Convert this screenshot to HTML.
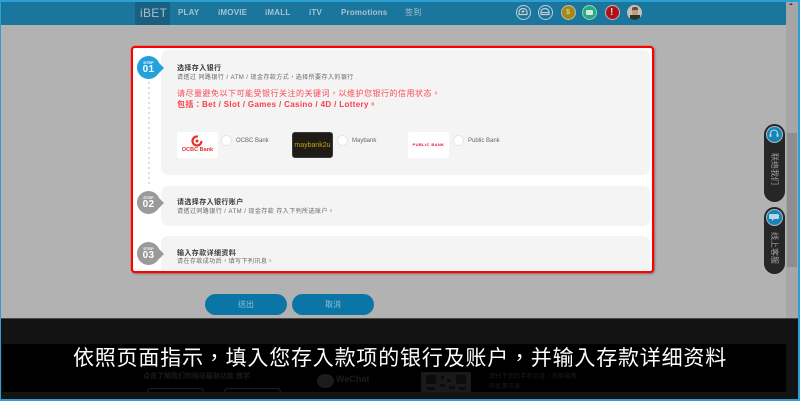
<!DOCTYPE html>
<html lang="zh-Hant"><head><meta charset="utf-8">
<style>
*{box-sizing:border-box}
html,body{margin:0;padding:0}
body{width:800px;height:401px;overflow:hidden;position:relative;background:#b2b2b2;font-family:"Liberation Sans","Noto Sans CJK TC",sans-serif}
.a{position:absolute;white-space:nowrap}
.nav{top:6px;font-size:8px;font-weight:bold;color:#a9c3d0;line-height:13px;letter-spacing:.2px}
.ic{position:absolute;top:5px;width:15px;height:15px;border-radius:50%;border:1.5px solid #c4ced3}
.card{position:absolute;left:161px;width:489px;background:#f4f4f4;border-radius:7px}
.badge{position:absolute;left:137px;width:23px;height:23px;border-radius:50%;color:#fff;text-align:center}
.badge:after{content:"";position:absolute;left:19px;top:3.5px;border-left:8px solid;border-left-color:inherit;border-top:8px solid transparent;border-bottom:8px solid transparent}
.badge b{position:absolute;left:0;width:23px;text-align:center}
.badge .s{top:4px;font-size:4px;line-height:5px;font-weight:bold}
.badge .n{top:8px;font-size:10px;line-height:11px;letter-spacing:.3px}
.t1{font-size:7px;font-weight:bold;color:#3a3a3a;left:177px;line-height:10px;letter-spacing:.4px}
.t2{font-size:6px;color:#666;left:177px;line-height:9px;letter-spacing:.45px}
.radio{position:absolute;top:135px;width:11px;height:11px;border-radius:50%;background:#fff;border:1px solid #e6e6e6}
.bl{top:137px;font-size:6px;color:#666;line-height:9px}
.logo{position:absolute;top:132px;width:41px;height:26px;border-radius:2px;background:#fff;overflow:hidden}
.dot{position:absolute;left:148px;width:2px;height:2px;border-radius:50%;background:#d2d2d2}
.btn{position:absolute;top:294px;height:21px;border-radius:11px;background:#0b76a6;color:#8cc0d6;font-size:8px;line-height:21px;text-align:center}
.side{position:absolute;left:764px;width:21px;background:#262626;border-radius:11px}
.side i{position:absolute;left:2px;top:2px;width:17px;height:17px;border-radius:50%;background:#1585b6;border:1.5px solid #aeb9bd}
.side span{position:absolute;left:4px;width:13px;font-size:8px;line-height:13px;color:#a3a3a3;text-align:center;writing-mode:vertical-rl;text-orientation:sideways;top:29px}
</style></head>
<body>
<!-- header -->
<div class="a" style="left:0;top:0;width:800px;height:25px;background:#1b769d"></div>
<div class="a" style="left:135px;top:2px;width:35px;height:23px;background:#195f80"></div>
<div class="a" style="left:140px;top:5px;font-size:12px;line-height:16px;color:#a8bfca;letter-spacing:.3px">iBET</div>
<div class="a nav" style="left:178px">PLAY</div>
<div class="a nav" style="left:218px">iMOVIE</div>
<div class="a nav" style="left:265px">iMALL</div>
<div class="a nav" style="left:309px">iTV</div>
<div class="a nav" style="left:341px">Promotions</div>
<div class="a nav" style="left:405px;font-weight:normal">签到</div>
<div class="ic" style="left:516px"><svg width="12" height="12" viewBox="0 0 12 12" style="display:block"><path d="M2 8.500V6a4 3.500 0 0 1 8 0v2.500z" fill="none" stroke="#c4ced3" stroke-width="1.200"/><path d="M6 4v3M4.500 5.500h3" stroke="#c4ced3"/></svg></div>
<div class="ic" style="left:538px"><svg width="12" height="12" viewBox="0 0 12 12" style="display:block"><path d="M2 8.500V6a4 3.500 0 0 1 8 0v2.500z" fill="none" stroke="#c4ced3" stroke-width="1.200"/><path d="M2 6.500h8" stroke="#c4ced3"/></svg></div>
<div class="ic" style="left:561px;background:#a38a16;border-color:#bdbdae"></div>
<div class="a" style="left:566px;top:8px;font-size:7px;line-height:9px;font-weight:bold;color:#d5cc8e">$</div>
<div class="ic" style="left:582px;background:#1eae7f;border-color:#a9c7bd"></div>
<div class="a" style="left:586px;top:10px;width:7px;height:5px;background:#cfe9de;border-radius:1px"></div>
<div class="ic" style="left:605px;background:#b01016;border-color:#c5b5b5"></div>
<div class="a" style="left:610px;top:6px;font-size:10px;line-height:13px;font-weight:bold;color:#e9d5d5">!</div>
<div class="a" style="left:627px;top:5px;width:15px;height:15px;border-radius:50%;background:#c5c0b9;overflow:hidden">
  <div class="a" style="left:5px;top:2px;width:6px;height:4px;background:#6b4a2c;border-radius:2px"></div>
  <div class="a" style="left:5px;top:5px;width:6px;height:5px;background:#c79a74;border-radius:2px"></div>
  <div class="a" style="left:3px;top:10px;width:10px;height:5px;background:#26372f"></div>
</div>

<!-- scrollbar -->
<div class="a" style="left:786px;top:2px;width:12px;height:397px;background:#a6a6a6"></div>
<div class="a" style="left:787px;top:133px;width:10px;height:134px;background:#8e8e8e"></div>
<div class="a" style="left:789px;top:3px;border-left:2px solid transparent;border-right:2px solid transparent;border-bottom:2px solid #333"></div>

<!-- main panel -->
<div class="a" style="left:131px;top:46px;width:523px;height:227px;background:#fff;border:2px solid #f00;border-radius:4px;box-shadow:0 0 1px #f00,1px 1px 2px rgba(0,0,0,.3)"></div>
<div class="card" style="top:50px;height:125px"></div>
<div class="card" style="top:186px;height:40px"></div>
<div class="card" style="top:236px;height:34px;border-radius:7px 7px 0 0"></div>

<div class="badge" style="top:56px;background:#22a1dc;border-color:#22a1dc"><b class="s">STEP</b><b class="n">01</b></div>
<div class="badge" style="top:191px;background:#9a9a9a;border-color:#9a9a9a"><b class="s">STEP</b><b class="n">02</b></div>
<div class="badge" style="top:242px;background:#9a9a9a;border-color:#9a9a9a"><b class="s">STEP</b><b class="n">03</b></div>

<div class="dot" style="top:82px"></div><div class="dot" style="top:87px"></div><div class="dot" style="top:92px"></div><div class="dot" style="top:97px"></div><div class="dot" style="top:102px"></div><div class="dot" style="top:107px"></div><div class="dot" style="top:112px"></div><div class="dot" style="top:117px"></div><div class="dot" style="top:122px"></div><div class="dot" style="top:127px"></div><div class="dot" style="top:132px"></div><div class="dot" style="top:137px"></div><div class="dot" style="top:142px"></div><div class="dot" style="top:147px"></div><div class="dot" style="top:152px"></div><div class="dot" style="top:157px"></div><div class="dot" style="top:162px"></div><div class="dot" style="top:167px"></div><div class="dot" style="top:172px"></div><div class="dot" style="top:177px"></div><div class="dot" style="top:182px"></div>

<div class="a t1" style="top:64px">选择存入银行</div>
<div class="a t2" style="top:74px">请透过 同路银行 / ATM / 现金存款方式，选择所要存入的银行</div>
<div class="a" style="left:177px;top:88px;font-size:8px;line-height:11px;color:#fb4a55;letter-spacing:.5px">请尽量避免以下可能受银行关注的关键词，以维护您银行的信用状态。</div>
<div class="a" style="left:177px;top:99px;font-size:8px;line-height:11px;color:#fb3d48;font-weight:bold;letter-spacing:.35px">包括：Bet / Slot / Games / Casino / 4D / Lottery。</div>

<div class="logo" style="left:177px">
  <svg class="a" style="left:14px;top:3px" width="12" height="12" viewBox="0 0 12 12"><circle cx="6" cy="6" r="4.500" fill="none" stroke="#e5332a" stroke-width="2.200" stroke-dasharray="22 6"/><circle cx="6" cy="6" r="1.500" fill="#e5332a"/></svg>
  <div class="a" style="left:0;width:41px;text-align:center;top:14px;font-size:5.500px;line-height:8px;font-weight:bold;color:#e0322b">OCBC Bank</div>
</div>
<div class="radio" style="left:221px"></div>
<div class="a bl" style="left:236px">OCBC Bank</div>

<div class="logo" style="left:292px;background:#1f1b17;border:1px solid #3a3a3a;border-radius:3px">
  <div class="a" style="left:0;width:39px;text-align:center;top:8px;font-size:7px;line-height:9px;color:#c9a114">maybank2u</div>
</div>
<div class="radio" style="left:337px"></div>
<div class="a bl" style="left:352px">Maybank</div>

<div class="logo" style="left:408px">
  <div class="a" style="left:0;width:41px;text-align:center;top:9px;font-size:4px;line-height:8px;font-weight:bold;color:#e0143c;letter-spacing:.4px">PUBLIC BANK</div>
</div>
<div class="radio" style="left:453px"></div>
<div class="a bl" style="left:468px">Public Bank</div>

<div class="a t1" style="top:198px">请选择存入银行账户</div>
<div class="a t2" style="top:208px">请透过同路银行 / ATM / 现金存款 存入下列所选账户。</div>
<div class="a t1" style="top:249px">输入存款详细资料</div>
<div class="a t2" style="top:258px">请在存款成功后，填写下列讯息。</div>

<!-- buttons -->
<div class="btn" style="left:205px;width:82px">送出</div>
<div class="btn" style="left:292px;width:82px;top:293.500px">取消</div>

<!-- side tabs -->
<div class="side" style="top:124px;height:78px"><i><svg width="14" height="14" viewBox="0 0 14 14" style="display:block"><path d="M3.500 8V6.500a3.500 3.500 0 0 1 7 0V8" fill="none" stroke="#b9d6e2" stroke-width="1"/><rect x="2.500" y="6.500" width="2" height="3.500" rx="1" fill="#b9d6e2"/><rect x="9.500" y="6.500" width="2" height="3.500" rx="1" fill="#b9d6e2"/></svg></i><span>联络我们</span></div>
<div class="side" style="top:207px;height:67px"><i><svg width="14" height="14" viewBox="0 0 14 14" style="display:block"><path d="M3 4h8a1 1 0 0 1 1 1v3a1 1 0 0 1-1 1H7l-2 2V9H3a1 1 0 0 1-1-1V5a1 1 0 0 1 1-1z" fill="#b9d6e2"/></svg></i><span style="top:25px">线上客服</span></div>

<!-- footer -->
<div class="a" style="left:0;top:318px;width:800px;height:83px;background:#131313;border-top:1px solid #4a4a4a"></div>
<div class="a" style="left:2px;top:344px;width:784px;height:48px;background:#000"></div>
<div class="a" style="left:143px;top:372px;font-size:7px;line-height:10px;color:#1b1b1b;font-weight:bold">点击了解我们的网站最新功能 教学</div>
<div class="a" style="left:147px;top:388px;width:57px;height:4px;border:1px solid #202020;border-bottom:0;border-radius:6px 6px 0 0"></div>
<div class="a" style="left:224px;top:388px;width:57px;height:4px;border:1px solid #202020;border-bottom:0;border-radius:6px 6px 0 0"></div>
<div class="a" style="left:336px;top:373px;font-size:9px;line-height:12px;font-weight:bold;color:#1d1d1d">WeChat</div>
<div class="a" style="left:317px;top:374px;width:17px;height:14px;border-radius:50%;background:#1c1c1c"></div>
<svg class="a" style="left:421px;top:372px" width="50" height="20" viewBox="0 0 50 20"><rect width="50" height="20" fill="#1a1a1a"/><path d="M5 3h10v9H5zM35 3h10v9H35zM20 4h3v3h-3zM26 7h4v3h-4zM19 12h5v3h-5zM28 14h6v3h-6zM6 15h8v3H6zM38 15h7v3h-7z" fill="#0c0c0c"/></svg>
<div class="a" style="left:489px;top:372px;font-size:6px;line-height:10px;color:#1d1d1d;letter-spacing:.3px">请扫下您的手机信息，获取最新<br>的优惠讯息</div>
<div class="a" style="left:73px;top:343px;font-size:21px;line-height:28px;color:#fff;font-family:'Noto Sans CJK TC',sans-serif;letter-spacing:.8px">依照页面指示，填入您存入款项的银行及账户，并输入存款详细资料</div>

<!-- window frame -->
<div class="a" style="left:0;top:0;width:800px;height:401px;border-style:solid;border-color:#2ba0d4;border-width:2px 2px 2px 1.500px"></div>
</body></html>
